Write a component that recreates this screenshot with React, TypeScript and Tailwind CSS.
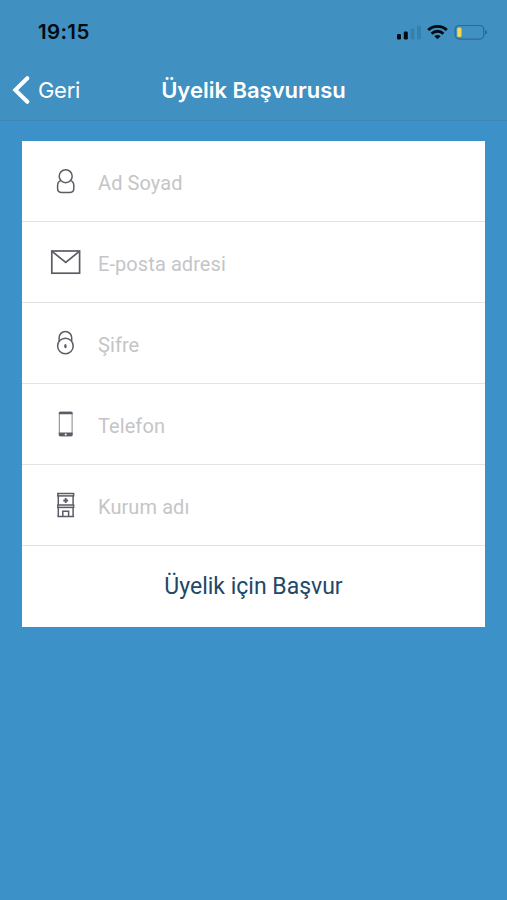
import type { ReactNode } from "react";

const INK = "#5c5c66";

function PersonIcon() {
  return (
    <svg width="32" height="32" viewBox="0 0 32 32" fill="none" stroke={INK} strokeWidth="1.5">
      <circle cx="15.700" cy="11.200" r="6.500" />
      <path d="M10.800 15.600C8.400 16.400 7.600 18.200 7.600 20.400v3.200c0 2.400 1.800 4 4.200 4h7.800c2.400 0 4.200-1.600 4.200-4v-3.200c0-2.200-.8-4-3.200-4.800" />
    </svg>
  );
}

function MailIcon() {
  return (
    <svg width="32" height="32" viewBox="0 0 32 32" fill="none" stroke={INK} strokeWidth="1.7">
      <rect x="1.800" y="5" width="27.800" height="22.200" />
      <path d="M2.100 5.400 15.700 16.400 29.300 5.400" />
    </svg>
  );
}

function LockIcon() {
  return (
    <svg width="32" height="32" viewBox="0 0 32 32" fill="none" stroke={INK} strokeWidth="1.500">
      <circle cx="15.400" cy="19" r="7.800" />
      <path d="M9.100 14.400v-3.600a6.300 6.300 0 0 1 12.600 0v3.600" />
      <ellipse cx="15.400" cy="19.200" rx="1.200" ry="2.100" fill={INK} stroke="none" />
    </svg>
  );
}

function PhoneIcon() {
  return (
    <svg width="32" height="32" viewBox="0 0 32 32" fill="none">
      <rect x="9.300" y="4.200" width="12.800" height="23.600" rx="1.200" stroke="#85858d" />
      <path d="M8.800 6.200V4.700Q8.800 3.700 10 3.700h11.400q1.200 0 1.200 1v1.500zM8.800 24.500h13.800v2.700q0 1.100-1.200 1.100H10q-1.200 0-1.200-1.100z" fill={INK} />
      <circle cx="15.700" cy="26.400" r="1" fill="#fff" />
    </svg>
  );
}

function BuildingIcon() {
  return (
    <svg width="32" height="32" viewBox="0 0 32 32" fill="none" stroke={INK} strokeWidth="1.500">
      <rect x="7.800" y="4.500" width="15.800" height="2.400" />
      <path d="M8.300 6.700v9.400M23.100 6.700v9.400M8.300 18.600v9M23.100 18.600v9M7.300 27.600h16.800" />
      <rect x="7.800" y="16" width="15.800" height="2.400" />
      <path d="M12.800 27.600v-5.400h5.800v5.400" />
      <path d="M13.300 11.500h4.800M15.700 9.100v4.800" strokeWidth="1.800" />
    </svg>
  );
}

const fields: { label: string; icon: ReactNode }[] = [
  { label: "Ad Soyad", icon: <PersonIcon /> },
  { label: "E-posta adresi", icon: <MailIcon /> },
  { label: "Şifre", icon: <LockIcon /> },
  { label: "Telefon", icon: <PhoneIcon /> },
  { label: "Kurum adı", icon: <BuildingIcon /> },
];

function StatusBar() {
  return (
    <div className="flex h-[62px] items-center justify-between pt-[2px] pr-[18px] pl-[38px]">
      <span className="font-['Inter',sans-serif] text-[20.500px] leading-6 font-semibold tracking-[0.350px] text-[#040c13]">19:15</span>
      <svg width="94" height="24" viewBox="0 0 94 24">
        <rect x="2" y="14" width="4" height="5.500" rx="1.300" fill="#040c13" />
        <rect x="8.800" y="11.500" width="4" height="8" rx="1.300" fill="#040c13" />
        <rect x="15.500" y="8.500" width="4" height="11" rx="1.300" fill="#3580ad" />
        <rect x="22" y="5.500" width="4" height="14" rx="1.300" fill="#3580ad" />
        <g fill="none" stroke="#040c13" strokeWidth="2.800">
          <path d="M33.200 10.100a13.300 13.300 0 0 1 18.600 0" />
          <path d="M36.600 13.700a8.300 8.300 0 0 1 11.800 0" />
        </g>
        <path d="M42.500 19.200 39.400 16.200a4.400 4.400 0 0 1 6.200 0z" fill="#040c13" />
        <rect x="60.200" y="5.500" width="28.600" height="13.600" rx="4" fill="none" stroke="#2d6a93" strokeWidth="1.200" />
        <rect x="62.200" y="7.500" width="4.300" height="9.600" rx="1.500" fill="#f3d955" />
        <path d="M90.200 10v4.600q1.900-.6 1.900-2.300T90.200 10z" fill="#2d6a93" />
      </svg>
    </div>
  );
}

export default function App() {
  return (
    <div className="h-[900px] w-[507px] overflow-hidden bg-[#3b91c8]">
      <header className="h-[121px] border-b border-[#3a87b8] bg-[#4090c1]">
        <StatusBar />
        <nav className="grid h-14 grid-cols-[1fr_auto_1fr] items-center font-['Inter',sans-serif] text-white">
          <button className="flex items-center pl-3">
            <svg width="18" height="30" viewBox="0 0 18 30" fill="none" stroke="white" strokeWidth="4" strokeLinecap="round" strokeLinejoin="miter">
              <path d="M15.300 3.200 3.300 15l12 11.800" />
            </svg>
            <span className="pl-[8px] text-[22px] leading-7 tracking-[-0.300px]">Geri</span>
          </button>
          <h1 className="text-[22px] leading-7 font-semibold">Üyelik Başvurusu</h1>
          <span />
        </nav>
      </header>
      <main className="mt-5 mr-[22px] ml-[22px] bg-white font-['Roboto',sans-serif]">
        {fields.map((field) => (
          <label key={field.label} className="flex h-[81px] items-center border-b border-[#e3e3e5] pl-7">
            {field.icon}
            <span className="pt-[3px] pl-4 text-[20px] leading-6 tracking-[0.080px] text-[#c5c5c7]">{field.label}</span>
          </label>
        ))}
        <button className="flex h-[81px] w-full items-center justify-center pt-[1px] text-[23px] text-[#224868]">Üyelik için Başvur</button>
      </main>
    </div>
  );
}
